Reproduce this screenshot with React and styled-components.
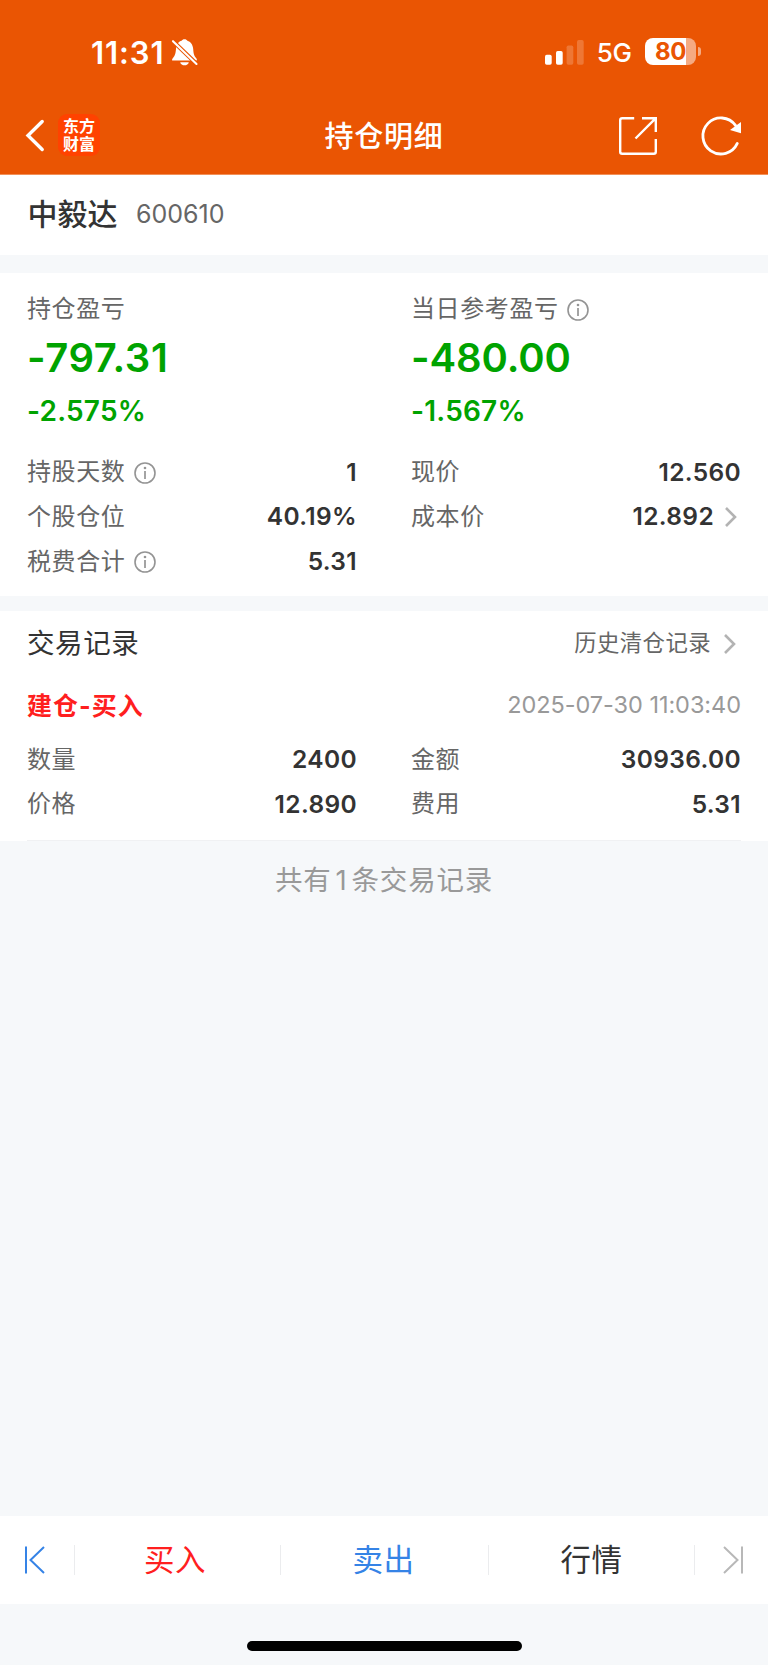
import React from "react";
import styled, { createGlobalStyle } from "styled-components";

const GlobalStyle = createGlobalStyle`
  * {
    box-sizing: border-box;
  }
  body {
    margin: 0;
    background-color: #f6f8fa;
    font-family: Inter, "Noto Sans CJK SC", sans-serif;
    line-height: 1.2;
    color: #333;
  }
`;

const Page = styled.div`
  width: 768px;
  height: 1665px;
  display: flex;
  flex-direction: column;
  background-color: #f6f8fa;
  overflow: hidden;
`;
const Header = styled.header`
  height: 175px;
  background-color: #ea5503;
  border-bottom: 1px solid #f29058;
  color: #fff;
`;
const StatusBar = styled.div`
  height: 105px;
  padding: 0 67px 0 91px;
  display: flex;
  align-items: center;
  justify-content: space-between;
`;
const StatusGroup = styled.div`
  display: flex;
  align-items: center;
`;
const Time = styled.span`
  font-size: 31px;
  font-weight: 600;
  letter-spacing: 0.9px;
  margin-right: 8px;
`;
const Network = styled.span`
  font-size: 26px;
  font-weight: 500;
  letter-spacing: -0.4px;
  margin: 1px 13.5px 0 13px;
`;
const Battery = styled.div`
  width: 51px;
  height: 27px;
  margin-top: -2px;
  border-radius: 8px;
  background: linear-gradient(to right, #fff 41px, #f5aa82 41px);
  color: #ea5503;
  font-size: 24px;
  font-weight: 700;
  line-height: 28px;
  letter-spacing: -0.3px;
  text-align: center;
`;
const BatteryTip = styled.div`
  width: 3px;
  height: 9px;
  margin: -2px 0 0 2px;
  border-radius: 0 4px 4px 0;
  background-color: #f5aa82;
`;
const NavBar = styled.div`
  height: 61px;
  padding: 0 27px 0 25px;
  display: grid;
  grid-template-columns: 1fr auto 1fr;
  align-items: center;
`;
const NavLeft = styled.div`
  display: flex;
  align-items: center;
  gap: 13px;
`;
const NavRight = styled.div`
  display: flex;
  align-items: center;
  justify-content: flex-end;
  gap: 45.5px;
`;
const Logo = styled.div`
  width: 42px;
  height: 42px;
  margin-top: -1px;
  padding-top: 3px;
  border-radius: 9px;
  background-color: #ff4200;
  font-size: 16px;
  font-weight: 700;
  line-height: 18px;
  text-align: center;
`;
const NavTitle = styled.h1`
  margin: 0;
  padding: 3px 0 0 2px;
  font-size: 29px;
  font-weight: 500;
  letter-spacing: 0.8px;
`;
const StockBar = styled.div`
  height: 80px;
  padding: 0 27.5px 2px;
  display: flex;
  align-items: center;
  gap: 18.5px;
  background-color: #fff;
`;
const StockName = styled.span`
  font-size: 30px;
  font-weight: 500;
`;
const StockCode = styled.span`
  font-size: 25px;
  color: #666;
  letter-spacing: 0;
`;
const Card = styled.section`
  height: ${(props) => props.height};
  margin-top: ${(props) => props.gap};
  padding: 0 27px;
  background-color: #fff;
`;
const Columns = styled.div`
  display: grid;
  grid-template-columns: 329.5px 329.5px;
  column-gap: 54.5px;
`;
const Summary = styled.div`
  padding-top: 20px;
`;
const Label = styled.div`
  display: flex;
  align-items: center;
  gap: 8.5px;
  height: 32px;
  padding-top: 1px;
  font-size: 24px;
  letter-spacing: 0.6px;
  color: #666;
`;
const Amount = styled.div`
  height: 67px;
  line-height: 66px;
  font-size: 40px;
  font-weight: 600;
  letter-spacing: ${(props) => props.spacing};
  color: #00a300;
`;
const Percent = styled.div`
  height: 38px;
  line-height: 38px;
  font-size: 28px;
  font-weight: 600;
  letter-spacing: 0.2px;
  color: #00a300;
`;
const Details = styled(Columns)`
  padding-top: ${(props) => props.top};
`;
const Row = styled.div`
  height: 44.6px;
  display: flex;
  align-items: center;
  justify-content: space-between;
`;
const Value = styled.span`
  display: flex;
  align-items: center;
  gap: 10px;
  margin-right: -0.5px;
  font-size: 24.5px;
  font-weight: 600;
  letter-spacing: 0.35px;
  color: #333;
`;
const SectionHead = styled.div`
  height: 65px;
  padding-top: 1px;
  display: flex;
  align-items: center;
  justify-content: space-between;
`;
const SectionTitle = styled.h2`
  margin: 0;
  font-size: 27.5px;
  font-weight: 400;
  letter-spacing: 0.6px;
`;
const HistoryLink = styled.span`
  display: flex;
  align-items: center;
  gap: 12px;
  padding-right: 1px;
  font-size: 22.4px;
  letter-spacing: 0.4px;
  color: #666;
`;
const TradeHead = styled.div`
  height: 60px;
  display: flex;
  align-items: center;
  justify-content: space-between;
`;
const TradeType = styled.span`
  font-size: 25px;
  font-weight: 700;
  letter-spacing: 1px;
  color: #ff1f1f;
`;
const TradeTime = styled.span`
  font-size: 23.5px;
  letter-spacing: -0.05px;
  color: #999;
`;
const Divider = styled.div`
  height: 1px;
  background-color: #f0f1f3;
  margin-top: 13.5px;
`;
const Total = styled.p`
  margin: 0;
  height: 80px;
  line-height: 79px;
  text-align: center;
  font-size: 27.5px;
  letter-spacing: 0.8px;
  color: #999;
`;
const Count = styled.span`
  margin: 0 4px;
`;
const TabBar = styled.nav`
  margin-top: auto;
  height: 88px;
  display: grid;
  grid-template-columns: 74px 206px 208px 206px 74px;
  align-items: center;
  background-color: #fff;
`;
const Tab = styled.div`
  height: 30px;
  padding-right: ${(props) => props.inset || "0"};
  display: flex;
  align-items: center;
  justify-content: center;
  border-left: ${(props) => (props.first ? "none" : "1px solid #ebecee")};
  font-size: 30.5px;
  line-height: 30px;
  letter-spacing: 0.6px;
  color: ${(props) => props.color};
`;
const HomeArea = styled.div`
  height: 61px;
  padding-top: 37px;
  display: flex;
  justify-content: center;
`;
const HomeBar = styled.div`
  width: 275px;
  height: 9.5px;
  border-radius: 5px;
  background-color: #000;
`;
const Svg = styled.svg`
  display: block;
  flex: none;
  overflow: visible;
`;

const BellOff = () => (
  <Svg width="26" height="28" viewBox="0 0 26 28">
    <path
      d="M0.8 21.6C-0.4 21.6 0 19.8 1 18.9C3 16.5 3.6 14.5 4 10C4.4 5 7 2.3 9.6 1.8C10.3 -0.4 14.7 -0.4 15.4 1.8C18.5 2.6 20.8 5.5 21.2 10C21.5 14.5 22 16.5 24 18.9C25 19.8 25.4 21.6 24.2 21.6Z"
      fill="#fff"
    />
    <path d="M8.2 23.2H16.8C16 27.4 9 27.4 8.2 23.2Z" fill="#fff" />
    <path d="M0 1.2L26 26.2" stroke="#ea5503" strokeWidth="4.2" />
    <path d="M1 2.2L24.5 25" stroke="#fff" strokeWidth="2.1" strokeLinecap="round" />
  </Svg>
);

const Signal = () => (
  <Svg width="39" height="25" viewBox="0 0 39 25" fill="#fff">
    <rect x="0" y="14.7" width="6.7" height="10" rx="1.7" />
    <rect x="11" y="11" width="6.7" height="13.7" rx="1.7" />
    <rect x="21.6" y="5.5" width="6.7" height="19.2" rx="1.7" opacity="0.2" />
    <rect x="32" y="0" width="6.7" height="24.7" rx="1.7" opacity="0.2" />
  </Svg>
);

const Back = () => (
  <Svg width="20" height="32" viewBox="0 0 20 32">
    <path
      d="M17.2 1.5L3 15.5L17.2 29.5"
      fill="none"
      stroke="#fff"
      strokeWidth="3.4"
      strokeLinecap="round"
    />
  </Svg>
);

const Share = () => (
  <Svg width="38" height="38" viewBox="0 0 38 38" fill="none" stroke="#fff" strokeWidth="2.4">
    <path d="M15.2 1.2H3.2Q1.2 1.2 1.2 3.2V34.8Q1.2 36.8 3.2 36.8H34.8Q36.8 36.8 36.8 34.8V22" />
    <path d="M23 1.2H36.8V15M36.8 1.2L16.5 21.5" />
  </Svg>
);

const Refresh = () => (
  <Svg width="39" height="38" viewBox="0 0 39 38">
    <path
      d="M35.3 26.4A18 18 0 1 1 33.5 8.4"
      fill="none"
      stroke="#fff"
      strokeWidth="2.8"
      strokeLinecap="round"
    />
    <path d="M39 5V16.2L28 13Z" fill="#fff" />
  </Svg>
);

const Info = () => (
  <Svg width="22" height="22" viewBox="0 0 22 22">
    <circle cx="11" cy="11" r="10" fill="none" stroke="#949494" strokeWidth="1.6" />
    <circle cx="11" cy="6" r="1.3" fill="#949494" />
    <path d="M11 9V17" stroke="#949494" strokeWidth="1.7" />
  </Svg>
);

const Chevron = () => (
  <Svg width="17" height="20" viewBox="0 0 17 20">
    <path d="M2 1L11 10L2 19" fill="none" stroke="#b3b3b3" strokeWidth="2.6" />
  </Svg>
);

const First = () => (
  <Svg width="20" height="28" viewBox="0 0 20 28" fill="none" stroke="#3583e6" strokeWidth="2">
    <path d="M1 0.5V27.5M19 1L5.5 14L19 27" />
  </Svg>
);

const Last = () => (
  <Svg width="18" height="28" viewBox="0 0 18 28" fill="none" stroke="#b8b8b8" strokeWidth="2">
    <path d="M19 0.5V27.5M1 1L14.5 14L1 27" />
  </Svg>
);

const Field = ({ label, value, info, link }) => (
  <Row>
    <Label>
      {label}
      {info && <Info />}
    </Label>
    <Value>
      {value}
      {link && <Chevron />}
    </Value>
  </Row>
);

const App = () => {
  return (
    <Page>
      <GlobalStyle />
      <Header>
        <StatusBar>
          <StatusGroup>
            <Time>11:31</Time>
            <BellOff />
          </StatusGroup>
          <StatusGroup>
            <Signal />
            <Network>5G</Network>
            <Battery>80</Battery>
            <BatteryTip />
          </StatusGroup>
        </StatusBar>
        <NavBar>
          <NavLeft>
            <Back />
            <Logo>
              东方
              <br />
              财富
            </Logo>
          </NavLeft>
          <NavTitle>持仓明细</NavTitle>
          <NavRight>
            <Share />
            <Refresh />
          </NavRight>
        </NavBar>
      </Header>

      <StockBar>
        <StockName>中毅达</StockName>
        <StockCode>600610</StockCode>
      </StockBar>

      <Card gap="18px" height="323px">
        <Columns>
          <Summary>
            <Label>持仓盈亏</Label>
            <Amount spacing="0.6px">-797.31</Amount>
            <Percent>-2.575%</Percent>
          </Summary>
          <Summary>
            <Label>
              当日参考盈亏
              <Info />
            </Label>
            <Amount spacing="-0.1px">-480.00</Amount>
            <Percent>-1.567%</Percent>
          </Summary>
        </Columns>
        <Details top="20px">
          <Field label="持股天数" value="1" info />
          <Field label="现价" value="12.560" />
          <Field label="个股仓位" value="40.19%" />
          <Field label="成本价" value="12.892" link />
          <Field label="税费合计" value="5.31" info />
        </Details>
      </Card>

      <Card gap="14.5px" height="230.5px">
        <SectionHead>
          <SectionTitle>交易记录</SectionTitle>
          <HistoryLink>
            历史清仓记录
            <Chevron />
          </HistoryLink>
        </SectionHead>
        <TradeHead>
          <TradeType>建仓-买入</TradeType>
          <TradeTime>2025-07-30 11:03:40</TradeTime>
        </TradeHead>
        <Details top="2px">
          <Field label="数量" value="2400" />
          <Field label="金额" value="30936.00" />
          <Field label="价格" value="12.890" />
          <Field label="费用" value="5.31" />
        </Details>
        <Divider />
      </Card>
      <Total>
        共有<Count>1</Count>条交易记录
      </Total>

      <TabBar>
        <Tab first inset="4px">
          <First />
        </Tab>
        <Tab color="#ff1f1f" inset="5px">
          买入
        </Tab>
        <Tab color="#3583e6" inset="2px">
          卖出
        </Tab>
        <Tab color="#333">行情</Tab>
        <Tab>
          <Last />
        </Tab>
      </TabBar>
      <HomeArea>
        <HomeBar />
      </HomeArea>
    </Page>
  );
};

export default App;
